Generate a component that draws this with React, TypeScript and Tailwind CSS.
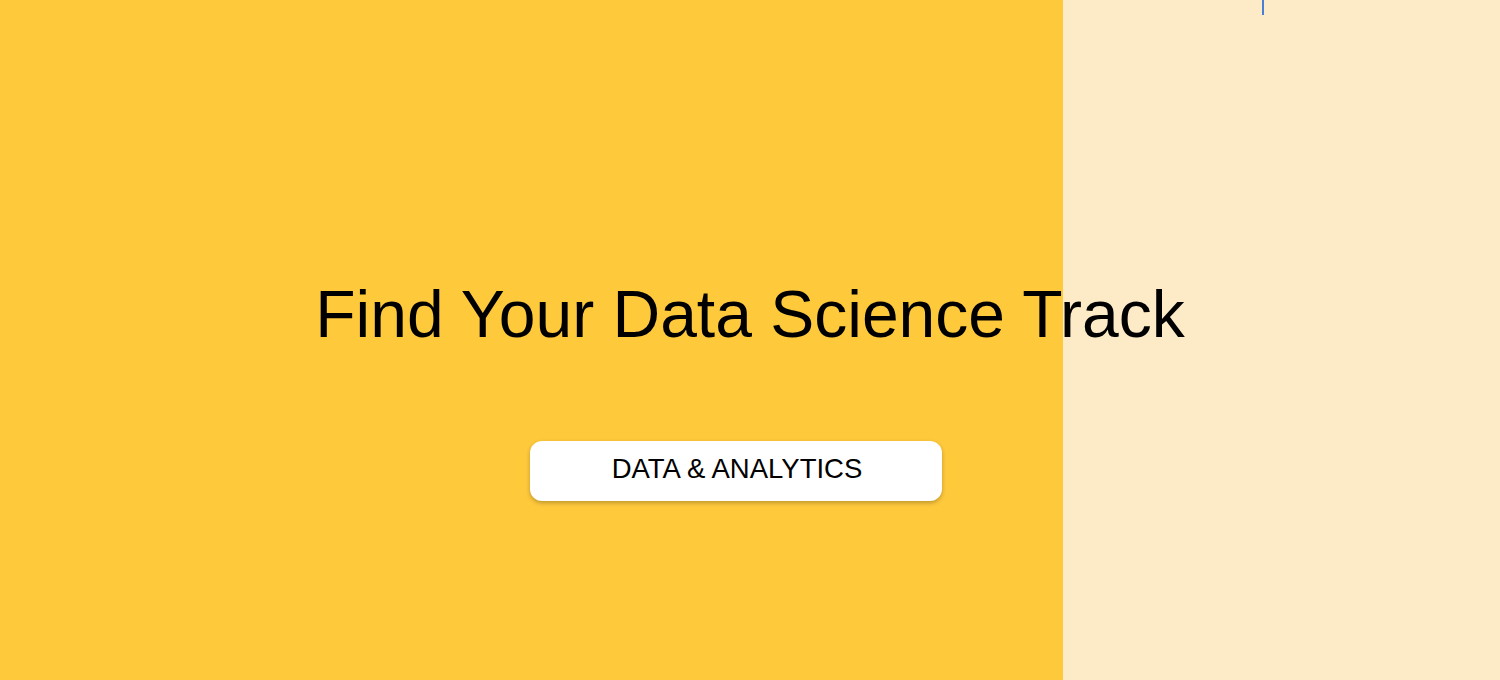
import React from "react";

export default function App() {
  return (
    <div className="relative min-h-[680px] w-full overflow-hidden bg-[linear-gradient(to_right,#ffc93c_1063px,#fdebc8_1063px)] font-['Liberation_Sans',Arial,sans-serif] text-black">
      {/* caret mark at the top of the side panel */}
      <div className="absolute left-[1262px] top-0 h-[15px] w-[2px] bg-[#4a7fd8]" />

      <main className="flex flex-col items-center pt-[281px]">
        <h1 className="text-[66px] leading-none font-normal">
          Find Your Data Science Track
        </h1>
        <button
          type="button"
          className="mt-[94px] mr-[28px] flex h-[60px] w-[412px] items-center justify-center rounded-xl bg-white pb-[4px] pl-[2px] text-[27.5px] leading-none shadow-[0_2px_4px_rgba(0,0,0,0.25)]"
        >
          DATA &amp; ANALYTICS
        </button>
      </main>
    </div>
  );
}
